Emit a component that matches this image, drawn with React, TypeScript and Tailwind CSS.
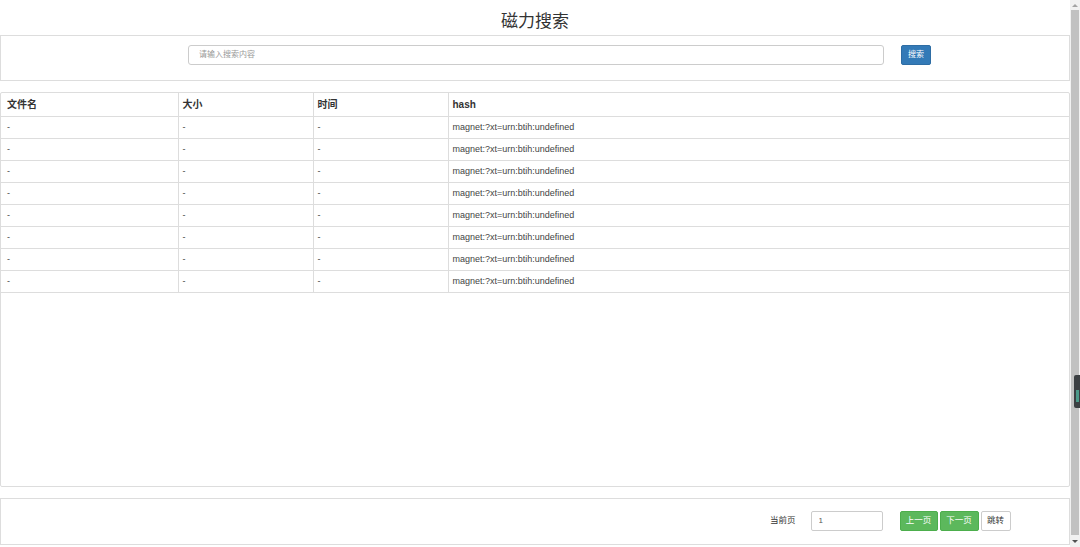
import React from "react";

const rows = Array.from({ length: 8 }, () => ({
  name: "-",
  size: "-",
  time: "-",
  hash: "magnet:?xt=urn:btih:undefined",
}));

const Scrollbar = () => {
  return (
    <div className="relative flex w-[10px] shrink-0 flex-col items-center bg-[#f1f1f1]">
      <div className="flex h-[10px] items-center justify-center">
        <div className="h-0 w-0 border-x-[3px] border-b-[3px] border-x-transparent border-b-[#a3a3a3]" />
      </div>
      <div className="w-[8px] flex-1 bg-[#c1c1c1]" />
      <div className="flex h-[12px] items-center justify-center">
        <div className="h-0 w-0 border-x-[3px] border-t-[3px] border-x-transparent border-t-[#505050]" />
      </div>
      <div className="absolute right-0 top-[375px] flex h-[33px] w-[6px] flex-col justify-end rounded-l-[2px] bg-[#3c4043] pb-[6px] pl-[2px]">
        <div className="h-[12px] w-[3px] bg-[#4c9a8a]" />
      </div>
    </div>
  );
};

const App = () => {
  return (
    <div
      className="flex h-[547px] w-[1080px] overflow-hidden bg-white text-[#333]"
      style={{ fontFamily: '"Liberation Sans", "Noto Sans CJK SC", sans-serif' }}
    >
      <div className="flex w-[1070px] flex-col">
        <h3 className="flex h-[35px] items-center justify-center pt-[9px] text-[17px] font-normal text-[#333]">
          磁力搜索
        </h3>

        <div className="flex h-[46px] items-center border border-[#ddd] pb-[7px] pl-[187px]">
          <input
            type="text"
            placeholder="请输入搜索内容"
            className="box-border h-[20px] w-[696px] rounded-[3px] border border-[#ccc] px-[10px] text-[8px] text-[#555] placeholder:text-[#999] focus:outline-none"
          />
          <button className="ml-[17px] h-[20px] w-[30px] rounded-[2px] border border-[#2e6da4] bg-[#337ab7] text-[8px] text-white">
            搜索
          </button>
        </div>

        <div className="mt-[11px] h-[395px] rounded-[2px] border border-[#ddd]">
          <table className="w-full border-collapse text-[9px] text-[#444]">
            <thead>
              <tr className="h-[23px] border-b border-[#ddd] text-left text-[#333]">
                <th className="w-[177px] border-r border-[#ddd] pl-[6px] text-[10px] font-bold">文件名</th>
                <th className="w-[135px] border-r border-[#ddd] pl-[4px] text-[10px] font-bold">大小</th>
                <th className="w-[135px] border-r border-[#ddd] pl-[4px] text-[10px] font-bold">时间</th>
                <th className="pl-[4px] text-[10px] font-bold">hash</th>
              </tr>
            </thead>
            <tbody>
              {rows.map((row, index) => (
                <tr key={index} className="h-[22px] border-b border-[#ddd]">
                  <td className="border-r border-[#ddd] pl-[6px] pt-[2px]">{row.name}</td>
                  <td className="border-r border-[#ddd] pl-[4px] pt-[2px]">{row.size}</td>
                  <td className="border-r border-[#ddd] pl-[4px] pt-[2px]">{row.time}</td>
                  <td className="pl-[4px] pt-[2px]">{row.hash}</td>
                </tr>
              ))}
            </tbody>
          </table>
        </div>

        <div className="mt-[11px] flex h-[47px] items-center border border-[#ddd] pb-[2px] pl-[769px]">
          <span className="text-[8.5px]">当前页</span>
          <input
            type="text"
            defaultValue="1"
            className="ml-[15px] box-border h-[20px] w-[72px] rounded-[2px] border border-[#ccc] px-[7px] text-[8px] text-[#555] focus:outline-none"
          />
          <button className="ml-[17px] h-[20px] w-[38px] rounded-[2px] border border-[#4cae4c] bg-[#5cb85c] text-[8.5px] text-white">
            上一页
          </button>
          <button className="ml-[2px] h-[20px] w-[39px] rounded-[2px] border border-[#4cae4c] bg-[#5cb85c] text-[8.5px] text-white">
            下一页
          </button>
          <button className="ml-[2px] h-[20px] w-[30px] rounded-[2px] border border-[#ccc] bg-white text-[8.5px] text-[#333]">
            跳转
          </button>
        </div>
      </div>
      <Scrollbar />
    </div>
  );
};

export default App;
